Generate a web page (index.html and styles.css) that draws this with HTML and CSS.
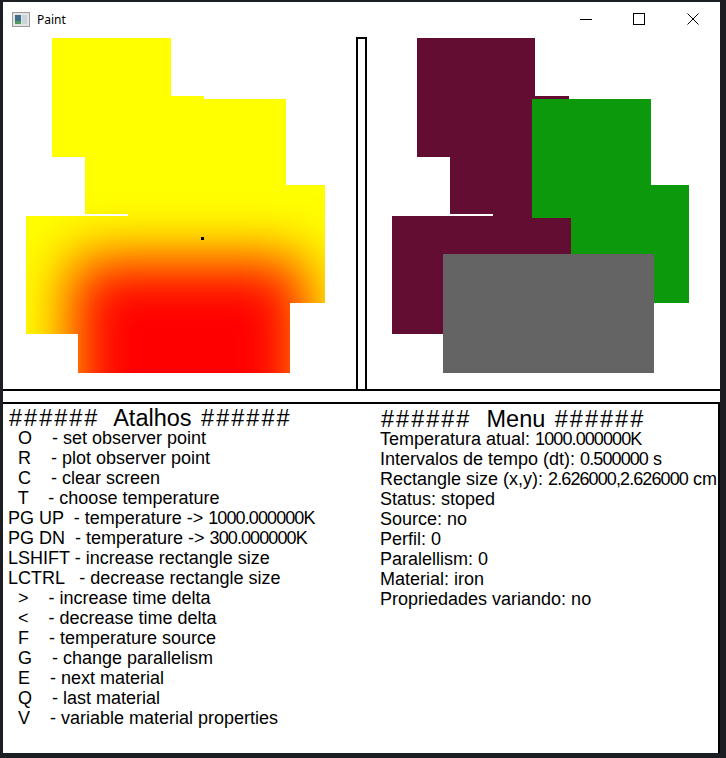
FILE: index.html
```html
<html>
    <head>
        <link rel="stylesheet" href="styles.css">
    </head>
    <body>
        <div class="window">
            <div class="titlebar">
                <svg class="app-icon" width="18" height="15" viewBox="0 0 18 15">
                    <rect x="0.5" y="0.5" width="17" height="14" fill="#e4e4e4" stroke="#9c9c9c"/>
                    <rect x="3" y="3" width="6" height="9" fill="#3d6f88"/>
                    <rect x="3" y="9" width="6" height="3" fill="#4f9a5c"/>
                    <rect x="10" y="3" width="5" height="9" fill="#c9d4da"/>
                </svg>
                <span class="title">Paint</span>
                <div class="controls">
                    <div class="ctl ctl-min">
                        <svg width="12" height="12" viewBox="0 0 12 12"><line x1="0" y1="6.5" x2="12" y2="6.5" stroke="#000"/></svg>
                    </div>
                    <div class="ctl">
                        <svg width="12" height="12" viewBox="0 0 12 12"><rect x="0.5" y="0.5" width="11" height="11" fill="none" stroke="#000"/></svg>
                    </div>
                    <div class="ctl">
                        <svg width="12" height="12" viewBox="0 0 12 12"><path d="M0.5 0.5 L11.5 11.5 M11.5 0.5 L0.5 11.5" stroke="#000" fill="none"/></svg>
                    </div>
                </div>
            </div>

            <div class="canvases">
                <svg class="canvas" viewBox="3 36 353 353">
                    <defs>
                        <clipPath id="plate">
                            <rect x="52" y="38" width="119" height="119"/>
                            <rect x="85" y="96" width="119" height="118"/>
                            <rect x="26" y="216" width="180" height="118"/>
                            <rect x="128" y="212" width="39" height="6"/>
                            <rect x="167" y="99" width="119" height="119"/>
                            <rect x="206" y="185" width="119" height="118"/>
                            <rect x="78" y="254" width="212" height="119"/>
                        </clipPath>
                        <filter id="spread" x="-60%" y="-60%" width="220%" height="220%">
                            <feGaussianBlur stdDeviation="29"/>
                        </filter>
                    </defs>
                    <g clip-path="url(#plate)">
                        <rect x="0" y="30" width="360" height="360" fill="#ffff00"/>
                        <rect x="72" y="260" width="233" height="200" fill="#ff0000" filter="url(#spread)"/>
                    </g>
                    <rect x="201" y="237" width="3" height="3" fill="#000"/>
                </svg>
                <div class="divider"></div>
                <svg class="canvas" viewBox="367 36 353 353">
                    <g fill="#640d33">
                        <rect x="417" y="38" width="118" height="119"/>
                        <rect x="450" y="96" width="119" height="118"/>
                        <rect x="392" y="216" width="179" height="118"/>
                        <rect x="493" y="212" width="39" height="6"/>
                    </g>
                    <g fill="#0c990c">
                        <rect x="532" y="99" width="119" height="119"/>
                        <rect x="571" y="185" width="118" height="118"/>
                    </g>
                    <rect x="443" y="254" width="211" height="119" fill="#646464"/>
                </svg>
            </div>

            <div class="separator"></div>

            <div class="panel">
                <div class="column">
                    <div class="heading"><span class="hash">######</span>  Atalhos<span class="hash"> ######</span></div>
<pre class="lines">  O    - set observer point
  R    - plot observer point
  C    - clear screen
  T    - choose temperature
PG UP  - temperature -&gt; <span class="num">1000.000000</span>K
PG DN  - temperature -&gt; <span class="num">300.000000</span>K
LSHIFT - increase rectangle size
LCTRL   - decrease rectangle size
  &gt;    - increase time delta
  &lt;    - decrease time delta
  F    - temperature source
  G    - change parallelism
  E    - next material
  Q    - last material
  V    - variable material properties</pre>
                </div>
                <div class="column column-menu">
                    <div class="heading"><span class="hash">######</span>  Menu<span class="hash"> ######</span></div>
<pre class="lines">Temperatura atual: <span class="num">1000.000000</span>K
Intervalos de tempo (dt): <span class="num">0.500000</span> s
Rectangle size (x,y): <span class="num">2.626000,2.626000</span> cm
Status: stoped
Source: no
Perfil: 0
Paralellism: 0
Material: iron
Propriedades variando: no</pre>
                </div>
            </div>
        </div>
    </body>
</html>
```

FILE: styles.css
```css
body, html {
    margin: 0;
    width: 726px;
    height: 758px;
    overflow: hidden;
    background: #1b1e22;
}
.window {
    margin: 2px 6px 5px 3px;
    width: 717px;
    height: 751px;
    background: #fff;
    display: flex;
    flex-direction: column;
}
.titlebar {
    height: 34px;
    display: flex;
    align-items: center;
    font-family: "Noto Sans", sans-serif;
    font-size: 12px;
    color: #000;
}
.app-icon {
    margin-left: 9px;
    margin-top: 1px;
}
.title {
    margin-left: 7px;
    margin-top: 1px;
}
.controls {
    margin-left: auto;
    display: flex;
    height: 100%;
}
.ctl {
    width: 54px;
    display: flex;
    justify-content: center;
    align-items: center;
}
.ctl-min {
    width: 52px;
}
.canvases {
    display: flex;
    height: 353px;
}
.canvas {
    display: block;
    width: 353px;
    height: 353px;
}
.divider {
    width: 7px;
    margin-top: 1px;
    border: 2px solid #000;
    border-bottom: 0;
}
.separator {
    height: 11px;
    border-top: 2px solid #000;
    border-bottom: 2px solid #000;
}
.panel {
    flex: 1;
    display: grid;
    grid-template-columns: 372px 1fr;
    padding: 4px 0 0 5px;
    border-right: 2px solid #000;
    font-family: "Liberation Sans", Arial, sans-serif;
    font-size: 18px;
    line-height: 20px;
    color: #000;
    overflow: hidden;
}
.column-menu {
    margin-top: 1px;
}
.heading {
    margin-left: 1px;
    font-size: 23.5px;
    line-height: 20px;
    word-spacing: 1px;
    white-space: pre;
}
.hash {
    letter-spacing: 2px;
}
.lines {
    margin: 0;
    font: inherit;
    white-space: pre;
}
.num {
    letter-spacing: -0.9px;
}
```
